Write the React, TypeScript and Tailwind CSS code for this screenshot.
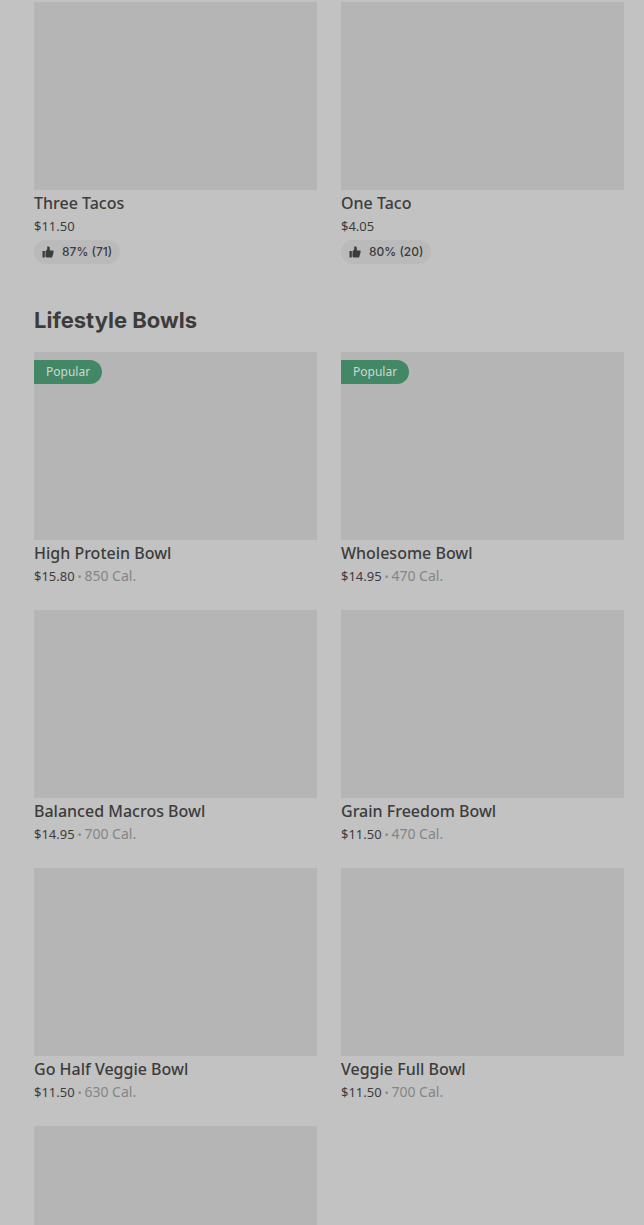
type Item = {
  name: string;
  price: string;
  calories?: string;
  rating?: string;
  popular?: boolean;
};

const tacos: Item[] = [
  { name: "Three Tacos", price: "$11.50", rating: "87% (71)" },
  { name: "One Taco", price: "$4.05", rating: "80% (20)" },
];

const bowls: Item[] = [
  { name: "High Protein Bowl", price: "$15.80", calories: "850 Cal.", popular: true },
  { name: "Wholesome Bowl", price: "$14.95", calories: "470 Cal.", popular: true },
  { name: "Balanced Macros Bowl", price: "$14.95", calories: "700 Cal." },
  { name: "Grain Freedom Bowl", price: "$11.50", calories: "470 Cal." },
  { name: "Go Half Veggie Bowl", price: "$11.50", calories: "630 Cal." },
  { name: "Veggie Full Bowl", price: "$11.50", calories: "700 Cal." },
];

function ThumbIcon() {
  return (
    <svg width="12" height="12" viewBox="0 0 12 12" fill="currentColor" aria-hidden="true">
      <path d="M0.5 5h2.3v6.5H0.5z" />
      <path d="M3.5 5.2 5.2 3.6V.5h1.2c.8 0 1.4.6 1.4 1.4v2.6h3.7v2.2l-1.4 4.8H4.7l-1.2-.7z" />
    </svg>
  );
}

function MenuItem({ item }: { item: Item }) {
  return (
    <li>
      <div className="relative h-47 bg-[#b5b5b5]">
        {item.popular && (
          <span className="absolute left-0 top-2 rounded-r-full bg-[#438866] px-3 text-xs leading-6 text-[#cfd6d2]">
            Popular
          </span>
        )}
      </div>
      <h3 className="mt-px text-base font-medium">{item.name}</h3>
      <p className="mt-px flex h-5 items-baseline gap-[3px] text-sm text-[#858585]">
        <span className="text-[13px] leading-5 text-[#3c3c3c]">{item.price}</span>
        {item.calories && (
          <>
            <span className="text-[10px]">•</span>
            <span>{item.calories}</span>
          </>
        )}
      </p>
      {item.rating && (
        <div className="mt-1 flex h-6 w-fit items-center gap-2 rounded-full bg-[#bababa] px-2 font-[Inter,sans-serif] text-xs font-medium">
          <ThumbIcon />
          {item.rating}
        </div>
      )}
    </li>
  );
}

export default function App() {
  return (
    <main className="h-screen overflow-hidden bg-[#c2c2c2] pl-[34px] pr-5 pt-0.5 font-['Noto_Sans',sans-serif] text-[#3c3c3c]">
      <ul className="grid grid-cols-2 gap-6">
        {tacos.map((item) => (
          <MenuItem key={item.name} item={item} />
        ))}
      </ul>

      <h2 className="mt-10 font-[Inter,sans-serif] text-[22px] leading-8 font-bold">
        Lifestyle Bowls
      </h2>
      <ul className="mt-4 grid grid-cols-2 gap-6">
        {bowls.map((item) => (
          <MenuItem key={item.name} item={item} />
        ))}
        <li className="h-47 bg-[#b5b5b5]" />
      </ul>
    </main>
  );
}
